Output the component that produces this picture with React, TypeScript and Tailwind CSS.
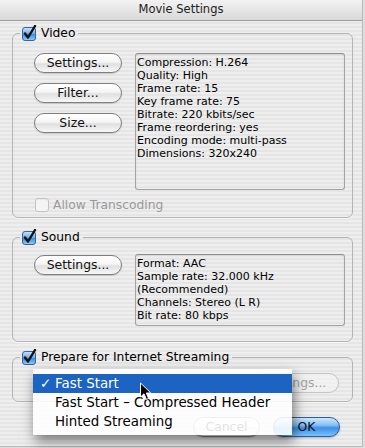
import React from "react";

const font = "font-['DejaVu_Sans','Liberation_Sans',sans-serif]";

function CheckedBox() {
  return (
    <svg width="16" height="16" viewBox="0 0 16 16" className="shrink-0">
      <defs>
        <linearGradient id="cbg" x1="0" y1="0" x2="0" y2="1">
          <stop offset="0" stopColor="#cfe6fb" />
          <stop offset="0.45" stopColor="#6fb0ec" />
          <stop offset="0.55" stopColor="#3f8fe0" />
          <stop offset="1" stopColor="#8fd0ff" />
        </linearGradient>
      </defs>
      <rect x="1.5" y="2.5" width="13" height="13" rx="2.5" fill="url(#cbg)" stroke="#3a6597" />
      <path d="M4 8.5 L7 12.5 L14 1" fill="none" stroke="#111" strokeWidth="2.4" strokeLinecap="round" strokeLinejoin="round" />
    </svg>
  );
}

function DisabledBox() {
  return (
    <span className="w-[14px] h-[14px] rounded-[3px] border border-[#c3c3c3] bg-[#f4f4f4] shrink-0 shadow-[inset_0_1px_1px_rgba(0,0,0,0.05)]" />
  );
}

function AquaButton({ children, className = "" }: { children: React.ReactNode; className?: string }) {
  return (
    <div
      className={
        "h-[20px] rounded-full border border-[#7f7f7f] bg-[linear-gradient(to_bottom,#ffffff_0%,#f5f5f5_45%,#e0e0e0_55%,#f7f7f7_100%)] shadow-[0_1px_1px_rgba(0,0,0,0.15)] flex items-center justify-center text-[12.4px] text-[#111] " +
        className
      }
    >
      {children}
    </div>
  );
}

function InfoBox({ lines, h }: { lines: string[]; h: string }) {
  return (
    <div className={"w-[210px] rounded-[3px] border border-[#a2a2a2] border-t-[#8e8e8e] shadow-[inset_0_1px_2px_rgba(0,0,0,0.08)] px-[1px] pt-[2px] text-[11px] leading-[13px] text-black " + h}>
      {lines.map((l) => (
        <div key={l} className="whitespace-nowrap">{l}</div>
      ))}
    </div>
  );
}

function Legend({ label }: { label: string }) {
  return (
    <legend className="ml-[7px] px-[1px] h-[16px]">
      <div className="flex items-center gap-[4px] h-[16px] pr-[2px] text-[12.3px] text-black">
        <CheckedBox />
        <span>{label}</span>
      </div>
    </legend>
  );
}

const stripes =
  "bg-[repeating-linear-gradient(to_bottom,#eeeeee_0px,#eeeeee_2px,#e5e5e5_2px,#e5e5e5_4px)]";

export default function App() {
  return (
    <div className={"w-[365px] h-[448px] relative overflow-hidden bg-[#dedede] " + font}>
      <div className={"w-[363px] h-[447px] border-r border-b border-[#b9b9b9] " + stripes}>
        <div className="h-[21px] border-b border-[#9c9c9c] bg-[linear-gradient(to_bottom,#f2f2f2,#d9d9d9)] flex items-center justify-center text-[11.5px] text-[#222]">
          Movie Settings
        </div>

        <div className="pl-[12px] pt-[4px] flex flex-col w-[353px]">
          {/* Video */}
          <fieldset className="w-[341px] border border-[#b4b4b4] rounded-[6px] shadow-[0_1px_0_rgba(255,255,255,0.7)]">
            <Legend label="Video" />
            <div className="pt-[12px] pl-[21px] pr-[7px] pb-[5px]">
              <div className="flex gap-[13px]">
                <div className="w-[88px] flex flex-col gap-[10px]">
                  <AquaButton>Settings...</AquaButton>
                  <AquaButton>Filter...</AquaButton>
                  <AquaButton>Size...</AquaButton>
                </div>
                <InfoBox
                  h="h-[137px]"
                  lines={[
                    "Compression: H.264",
                    "Quality: High",
                    "Frame rate: 15",
                    "Key frame rate: 75",
                    "Bitrate: 220 kbits/sec",
                    "Frame reordering: yes",
                    "Encoding mode: multi-pass",
                    "Dimensions: 320x240",
                  ]}
                />
              </div>
              <div className="mt-[8px] ml-[1px] h-[14px] flex items-center gap-[4px] text-[12.3px] text-[#9a9a9a]">
                <DisabledBox />
                <span>Allow Transcoding</span>
              </div>
            </div>
          </fieldset>

          {/* Sound */}
          <fieldset className="mt-[11px] w-[341px] border border-[#b4b4b4] rounded-[6px] shadow-[0_1px_0_rgba(255,255,255,0.7)]">
            <Legend label="Sound" />
            <div className="pt-[9px] pl-[21px] pr-[7px] pb-[15px]">
              <div className="flex gap-[13px] items-start">
                <div className="w-[88px] pt-[1px]">
                  <AquaButton>Settings...</AquaButton>
                </div>
                <InfoBox
                  h="h-[72px]"
                  lines={[
                    "Format: AAC",
                    "Sample rate: 32.000 kHz",
                    "(Recommended)",
                    "Channels: Stereo (L R)",
                    "Bit rate: 80 kbps",
                  ]}
                />
              </div>
            </div>
          </fieldset>

          {/* Streaming */}
          <fieldset className="mt-[7px] w-[341px] border border-[#b4b4b4] rounded-[6px] shadow-[0_1px_0_rgba(255,255,255,0.7)]">
            <Legend label="Prepare for Internet Streaming" />
            <div className="pt-[8px] pr-[13px] pb-[8px] flex justify-end">
              <div className="w-[88px] h-[20px] rounded-full border border-[#c4c4c4] bg-[#f3f3f3]/70 flex items-center justify-center text-[12.4px] text-[#a4a4a4]">
                Settings...
              </div>
            </div>
          </fieldset>

          <div className="mt-[15px] pr-[13px] flex justify-end gap-[13px]">
            <AquaButton className="w-[67px]">Cancel</AquaButton>
            <div className="w-[67px] h-[20px] rounded-full border border-[#2d5d9c] bg-[linear-gradient(to_bottom,#cfe7ff_0%,#86bff4_40%,#3d8fe6_55%,#78c4ff_100%)] shadow-[0_1px_2px_rgba(0,0,0,0.25)] flex items-center justify-center text-[12.4px] text-[#111]">
              OK
            </div>
          </div>
        </div>
      </div>

      {/* Popup menu */}
      <div className="absolute left-[33px] top-[369px] w-[259px] h-[66px] bg-white/[0.88] shadow-[2px_6px_12px_rgba(0,0,0,0.5)] py-[5px] text-[13.4px] leading-[19px] text-black">
        <div className="h-[19px] bg-[#1d63c2] text-white pl-[22px] relative">
          <span className="absolute left-[7px] top-0">✓</span>
          Fast Start
        </div>
        <div className="h-[19px] pl-[22px] whitespace-nowrap">Fast Start – Compressed Header</div>
        <div className="h-[19px] pl-[22px]">Hinted Streaming</div>
      </div>

      {/* Cursor */}
      <svg className="absolute left-[139px] top-[382px]" width="13" height="19" viewBox="0 0 13 19">
        <path d="M1.5 1 L1.5 15 L5 11.8 L7.4 17.4 L9.6 16.5 L7.3 11 L11.8 11 Z" fill="#000" stroke="#fff" strokeWidth="1" strokeLinejoin="round" />
      </svg>
    </div>
  );
}
